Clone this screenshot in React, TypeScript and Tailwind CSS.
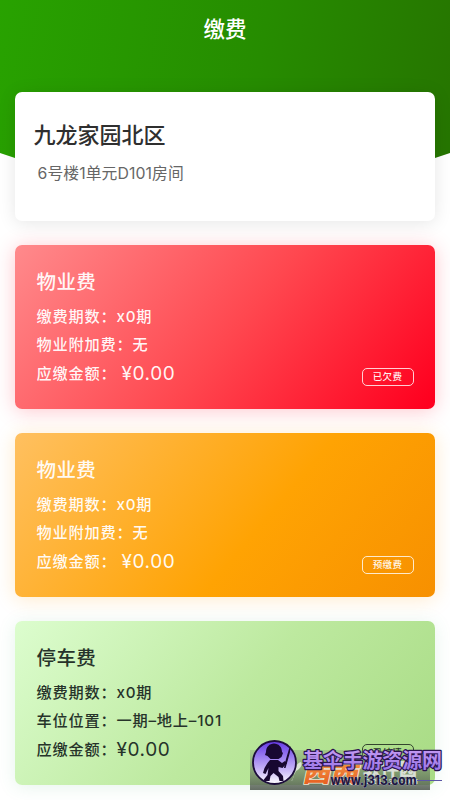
import clsx from "clsx";

const bills = [
  {
    id: 1,
    title: "物业费",
    rows: ["缴费期数：x0期", "物业附加费：无"],
    amount: "¥0.00",
    amountGap: "ml-[5px]",
    status: "已欠费",
    card: "text-white/95 bg-[linear-gradient(130deg,#ff8a8c_0%,#ff474f_52%,#ff001f_98%)] shadow-[0_2px_20px_rgba(255,40,60,0.26)]",
    badge: "border-white/80",
  },
  {
    id: 2,
    title: "物业费",
    rows: ["缴费期数：x0期", "物业附加费：无"],
    amount: "¥0.00",
    amountGap: "ml-[5px]",
    status: "预缴费",
    card: "text-white/95 bg-[linear-gradient(130deg,#ffc060_0%,#ffa303_58%,#f79000_100%)] shadow-[0_2px_20px_rgba(255,160,20,0.22)]",
    badge: "border-white/80",
  },
  {
    id: 3,
    title: "停车费",
    rows: ["缴费期数：x0期", "车位位置：一期–地上–101"],
    amount: "¥0.00",
    amountGap: "ml-0",
    status: "已结清",
    card: "text-[#26332a] bg-[linear-gradient(130deg,#dcfdce_0%,#bde99f_52%,#a8db84_100%)] shadow-[0_2px_18px_rgba(60,170,110,0.13)]",
    badge: "border-[#34452f]",
  },
];

const BillCard = ({ bill }: { bill: (typeof bills)[number] }) => (
  <div
    className={clsx(
      "flex h-[164px] items-end justify-between rounded-[7px] pl-[22px] pr-[21px]",
      bill.card
    )}
  >
    <div className="flex h-full flex-col whitespace-nowrap pt-[23px] text-[15.2px] font-medium tracking-[0.8px]">
      <h2 className="mb-[7px] text-[19.5px] leading-[28px] tracking-[0.4px]">
        {bill.title}
      </h2>
      {bill.rows.map((row) => (
        <p key={row} className="h-[27.5px] leading-[28px]">
          {row}
        </p>
      ))}
      <p className="flex h-[32px] items-center">
        应缴金额：
        <span
          className={clsx(
            "text-[19px] font-normal tracking-[0.6px]",
            bill.amountGap
          )}
        >
          {bill.amount}
        </span>
      </p>
    </div>
    <span
      className={clsx(
        "mb-[23px] flex h-[18px] w-[52px] items-center justify-center rounded-[5px] border-[1.5px] text-[9.5px] font-medium tracking-[0.3px]",
        bill.badge
      )}
    >
      {bill.status}
    </span>
  </div>
);

const Watermark = () => (
  <svg
    className="absolute left-[246px] top-[736px]"
    width="204"
    height="64"
    viewBox="246 736 204 64"
  >
    <defs>
      <linearGradient id="strip" x1="0" y1="0" x2="0" y2="1">
        <stop offset="0" stopColor="#7b9070" stopOpacity="0.3" />
        <stop offset="1" stopColor="#515a50" stopOpacity="0.88" />
      </linearGradient>
      <linearGradient id="disc" x1="0" y1="0" x2="0" y2="1">
        <stop offset="0" stopColor="#6438e6" />
        <stop offset="0.7" stopColor="#cdbcf8" />
        <stop offset="1" stopColor="#ffffff" />
      </linearGradient>
      <linearGradient id="orange" x1="0" y1="0" x2="0" y2="1">
        <stop offset="0" stopColor="#f7a04a" />
        <stop offset="1" stopColor="#e4571c" />
      </linearGradient>
      <linearGradient id="violet" x1="0" y1="0" x2="0" y2="1">
        <stop offset="0" stopColor="#cda2f5" />
        <stop offset="1" stopColor="#9471e6" />
      </linearGradient>
    </defs>
    <rect x="250" y="750" width="180" height="40" fill="url(#strip)" />
    <path d="M292 781c4-9 2-17 9-19 2 3-1 7-5 9l-3 6c0 3-2 3-1 4z" fill="#dce5d4" />
    <g fontFamily="'Noto Sans CJK SC', sans-serif" fontWeight="900">
      <text
        transform="translate(302 781.5) skewX(-12) scale(1.22 0.92)"
        fontSize="23"
        fill="url(#orange)"
        stroke="#f3e4cf"
        strokeWidth="1.6"
        paintOrder="stroke"
      >
        西西
      </text>
      <text x="363" y="776" fontSize="18" fill="#d9ded6">
        软件园
      </text>
    </g>
    <text
      x="364"
      y="784"
      fontSize="8"
      fontWeight="700"
      fontFamily="'Liberation Sans', sans-serif"
      textLength="54"
      fill="#d9ded6"
    >
      CR173.COM
    </text>
    <circle cx="274.5" cy="762.5" r="21.5" fill="url(#disc)" stroke="#1d0d3c" strokeWidth="1.8" />
    <g fill="#180831">
      <path d="M266 752c0-5 3.500-8.500 8-8.500s8 3.500 8 8.500l1 1-1.500 4-3 2h-8l-3-3-2.500-1z" />
      <path d="M270 760h8l4 3 3-2 2 2-4.500 5-4-1v4l4.500 5 .5 5h-4l-1-4-5-4-3 3-1 5h-5l-1-1 4-5 1-7-2 4-1 2-2.500-1 1.500-5 3-5z" />
      <path d="m284 768 2-9 3-10 1.500-3-.5 6-3 11-1.500 5z" />
    </g>
    <text
      x="303"
      y="767.5"
      fontSize="20"
      fontWeight="700"
      fontFamily="'Noto Sans CJK SC', sans-serif"
      textLength="139"
      fill="url(#violet)"
      stroke="#2b1450"
      strokeWidth="2.4"
      strokeLinejoin="round"
      paintOrder="stroke"
    >
      基伞手游资源网
    </text>
    <text
      x="330.5"
      y="784.5"
      fontSize="13"
      fontWeight="700"
      fontFamily="Inter, sans-serif"
      textLength="86"
      lengthAdjust="spacingAndGlyphs"
      fill="#1b1540"
      stroke="#a9a2cf"
      strokeWidth="0.6"
      paintOrder="stroke"
    >
      www.j313.com
    </text>
    <path d="M417 780.500h25" stroke="#5b55a5" strokeWidth="1" />
  </svg>
);

export default function App() {
  return (
    <div className="relative h-[800px] w-[450px] overflow-hidden bg-white font-['Inter','Noto_Sans_CJK_SC',sans-serif]">
      <header className="h-[235px] bg-[linear-gradient(100deg,#28a200_0%,#268c00_55%,#267300_100%)] [clip-path:polygon(0_0,100%_0,100%_153px,94%_162px,50%_218px,6%_162px,0_153px)]">
        <h1 className="pt-[13px] text-center text-[21.5px] font-medium leading-[32px] text-white">
          缴费
        </h1>
      </header>

      <main className="relative -mt-[143px] flex flex-col gap-[24px] pl-[14.5px] pr-[15.5px]">
        <section className="h-[129px] rounded-[7px] bg-white pl-[19px] pt-[28px] shadow-[0_2px_18px_rgba(0,0,0,0.1)]">
          <h2 className="text-[22px] font-medium leading-[30px] text-[#2f2f2f]">
            九龙家园北区
          </h2>
          <p className="mt-[12px] pl-[4px] text-[15.8px] leading-[24px] tracking-[0.1px] text-[#666]">
            6号楼1单元D101房间
          </p>
        </section>
        {bills.map((bill) => (
          <BillCard key={bill.id} bill={bill} />
        ))}
      </main>

      <Watermark />
    </div>
  );
}
